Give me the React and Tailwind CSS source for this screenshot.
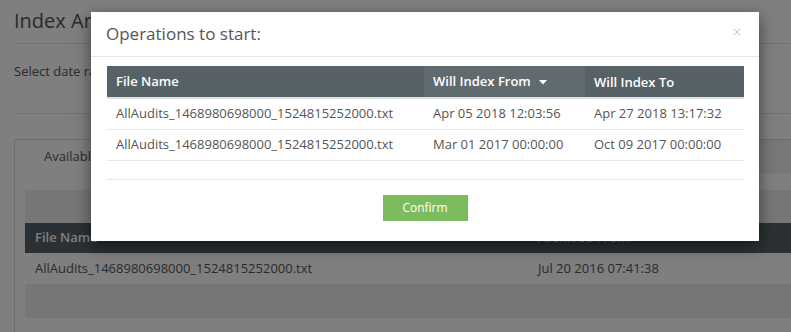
import { X } from "lucide-react"

const ops = [
    { name: "AllAudits_1468980698000_1524815252000.txt", from: "Apr 05 2018 12:03:56", to: "Apr 27 2018 13:17:32" },
    { name: "AllAudits_1468980698000_1524815252000.txt", from: "Mar 01 2017 00:00:00", to: "Oct 09 2017 00:00:00" },
]

function Page() {
    return <div className="w-[830px] pl-[14px] text-[13px] text-[#555]">
        <div className="h-[44px] pt-[6px] border-b border-[#e3e3e3] text-[20px] leading-[30px]">Index Archived Data</div>
        <div className="h-[70px] pt-[18px] border-b border-[#e3e3e3]">Select date range to index archived files</div>
        <div className="mt-[25px] border border-[#dcdcdc] pl-[10px] h-[200px]">
            <div className="flex h-[33px] bg-[#eef0f2]">
                <div className="bg-white px-[19px] flex items-center">Available Archives</div>
            </div>
            <div className="h-[17px]"></div>
            <div className="h-[33px] bg-[#eceef0]"></div>
            <div className="h-[30px] bg-[#556066] text-white font-semibold flex items-center">
                <div className="w-[513px] pl-[10px]">File Name</div>
                <div>Archived From</div>
            </div>
            <div className="h-[32px] flex items-center border-b border-[#e6e6e6]">
                <div className="w-[513px] pl-[10px]">AllAudits_1468980698000_1524815252000.txt</div>
                <div>Jul 20 2016 07:41:38</div>
            </div>
            <div className="h-[33px] bg-[#eceef0]"></div>
        </div>
    </div>
}

export default function App() {
    return <div className="relative w-[791px] h-[332px] overflow-hidden bg-white" style={{ fontFamily: "'Open Sans', sans-serif" }}>
        <Page />
        <div className="absolute inset-0 bg-black/50"></div>
        <div className="absolute left-[91px] top-[12px] w-[668px] bg-white shadow-[0_5px_15px_rgba(0,0,0,0.5)] text-[13px] text-[#555]">
            <div className="h-[45px] px-[15px] flex items-center justify-between border-b border-[#e5e5e5]">
                <div className="text-[17px] leading-[24px]">Operations to start:</div>
                <X size={12} strokeWidth={2} className="text-[#bdbdbd] mr-[1px] mb-[5px]" />
            </div>
            <div className="pt-[9px] pl-[16px] pr-[15px]">
                <div className="flex h-[33px] bg-[#576266] text-white font-semibold border-b-2 border-[#dde1e3]">
                    <div className="w-[317px] pl-[9px] flex items-center pt-[1px]">File Name</div>
                    <div className="w-[161px] pl-[9px] flex items-center bg-[#5f6b6f]">
                        Will Index From
                        <svg width="8" height="5" viewBox="0 0 8 5" className="ml-[8px] mt-[1px]"><path d="M0 0h8L4 4.5z" fill="#fff" /></svg>
                    </div>
                    <div className="flex-1 pl-[9px] flex items-center pt-[2px]">Will Index To</div>
                </div>
                {ops.map((o, i) => <div key={i} className="flex h-[31px] items-center border-b border-[#e6e6e6]">
                    <div className="w-[317px] pl-[9px]">{o.name}</div>
                    <div className="w-[161px] pl-[9px]">{o.from}</div>
                    <div className="flex-1 pl-[9px]">{o.to}</div>
                </div>)}
                <div className="h-[19px] border-b border-[#e5e5e5]"></div>
            </div>
            <div className="flex justify-center pt-[15px] pb-[20px]">
                <button className="w-[85px] h-[26px] bg-[#7dbc5e] text-white text-[12px]">Confirm</button>
            </div>
        </div>
    </div>
}
